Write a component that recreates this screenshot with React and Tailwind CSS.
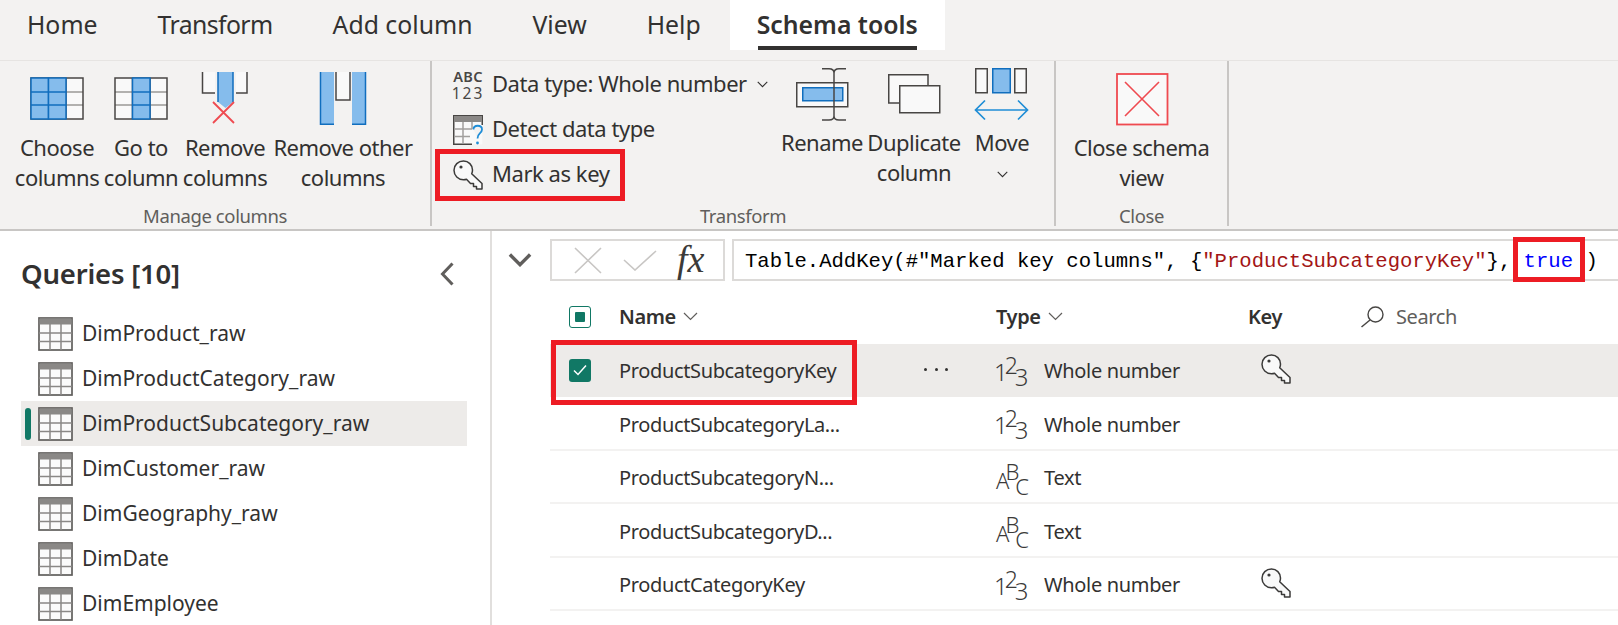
import React from 'react';

const tabs = ['Home', 'Transform', 'Add column', 'View', 'Help'];
const queries = ['DimProduct_raw', 'DimProductCategory_raw', 'DimProductSubcategory_raw', 'DimCustomer_raw', 'DimGeography_raw', 'DimDate', 'DimEmployee'];
const columns = [
    { name: 'ProductSubcategoryKey', kind: 'num', type: 'Whole number', isKey: true, selected: true },
    { name: 'ProductSubcategoryLa...', kind: 'num', type: 'Whole number' },
    { name: 'ProductSubcategoryN...', kind: 'abc', type: 'Text' },
    { name: 'ProductSubcategoryD...', kind: 'abc', type: 'Text' },
    { name: 'ProductCategoryKey', kind: 'num', type: 'Whole number', isKey: true },
];

const BLUE = '#85bcec';
const BLUE_LINE = '#106ebe';
const DARK = '#484644';
const WHITE = '#f9f9f9';
const RED = '#ef4a50';

const Canvas = ({ children }) => (
    <svg width="60" height="60" viewBox="0 0 60 60" fill="none" className="shrink-0">{children}</svg>
);

const GridIcon = ({ blue }) => {
    const xs = [4, 21.5, 39, 56];
    const ys = [12, 26, 39, 53];
    return (
        <Canvas>
            <rect x="4" y="12" width="52" height="41" fill={WHITE} />
            <line x1="4" x2="56" y1="26" y2="26" stroke="#9a9896" strokeWidth="1.5" />
            <line x1="4" x2="56" y1="39" y2="39" stroke="#9a9896" strokeWidth="1.5" />
            <rect x="4" y="12" width="52" height="41" stroke={DARK} strokeWidth="1.5" />
            <line x1="21.5" x2="21.5" y1="12" y2="53" stroke={DARK} strokeWidth="1.5" />
            <line x1="39" x2="39" y1="12" y2="53" stroke={DARK} strokeWidth="1.5" />
            {blue.map((c) => (
                <g key={c}>
                    <rect x={xs[c]} y="12" width={xs[c + 1] - xs[c]} height="41" fill={BLUE} stroke={BLUE_LINE} strokeWidth="1.5" />
                    {ys.slice(1, 3).map((y) => (
                        <line key={y} x1={xs[c]} x2={xs[c + 1]} y1={y} y2={y} stroke={BLUE_LINE} strokeWidth="1.5" />
                    ))}
                </g>
            ))}
        </Canvas>
    );
};

const RemoveIcon = () => (
    <Canvas>
        <path d="M7.5 6V27H52V6" fill={WHITE} stroke={DARK} strokeWidth="1.5" />
        <path d="M20 6V37L30.5 45L41 37V6Z" fill="#f3f2f1" />
        <path d="M23 6V36L30.5 42L38 36V6Z" fill={BLUE} />
        <path d="M23 6V36M38 6V36" stroke={BLUE_LINE} strokeWidth="1.5" />
        <path d="M18 36L39 57M39 36L18 57" stroke={RED} strokeWidth="1.8" />
    </Canvas>
);

const RemoveOtherIcon = () => (
    <Canvas>
        <path d="M23 6V34H37V6" fill={WHITE} stroke={DARK} strokeWidth="1.5" />
        <rect x="7" y="6" width="14" height="53" fill={BLUE} />
        <rect x="39" y="6" width="13.5" height="53" fill={BLUE} />
        <path d="M7.5 6V58.2H21M39 58.2H52.5V6" stroke={BLUE_LINE} strokeWidth="1.5" />
    </Canvas>
);

const RenameIcon = () => (
    <Canvas>
        <rect x="4.75" y="16.75" width="51" height="24" fill={WHITE} stroke={DARK} strokeWidth="1.5" />
        <rect x="10.75" y="21.75" width="40" height="13" fill={BLUE} stroke={BLUE_LINE} strokeWidth="1.5" />
        <path d="M30 2.75H37Q42 2.75 42 7V50Q42 54 37 54H30M54 2.75H47Q42 2.75 42 7M42 50Q42 54 47 54H54" stroke={DARK} strokeWidth="1.5" />
    </Canvas>
);

const DuplicateIcon = () => (
    <Canvas>
        <path d="M44 19V8.75H4.75V37H15" fill={WHITE} stroke={DARK} strokeWidth="1.5" />
        <rect x="15.75" y="19.75" width="40" height="27" fill={WHITE} stroke={DARK} strokeWidth="1.5" />
    </Canvas>
);

const MoveIcon = () => (
    <Canvas>
        <rect x="3.75" y="2.75" width="11.5" height="24" fill={WHITE} stroke={DARK} strokeWidth="1.5" />
        <rect x="20.75" y="2.75" width="17.5" height="24" fill={BLUE} stroke={BLUE_LINE} strokeWidth="1.5" />
        <rect x="42.75" y="2.75" width="11.5" height="24" fill={WHITE} stroke={DARK} strokeWidth="1.5" />
        <path d="M4 44H55M13 34.5L3.5 44L13 53.5M46 34.5L55.5 44L46 53.5" stroke="#1f8dd6" strokeWidth="1.7" />
    </Canvas>
);

const CloseIcon = () => (
    <Canvas>
        <rect x="5" y="8" width="50.5" height="50.5" fill={WHITE} stroke={RED} strokeWidth="1.8" />
        <path d="M13 16L47 50M47 16L13 50" stroke={RED} strokeWidth="1.6" />
    </Canvas>
);

const DetectIcon = () => (
    <svg width="30" height="30" viewBox="0 0 30 30" fill="none" className="shrink-0">
        <rect x="0.75" y="0.75" width="28.5" height="28.5" fill={WHITE} />
        <path d="M19 29.25H0.75V0.75H29.25V10" stroke={DARK} strokeWidth="1.5" />
        <rect x="1" y="1" width="28" height="6" fill="#8a8886" />
        <path d="M1 14H19M1 21.5H17M10 7V29M19 7V14" stroke="#a19f9d" strokeWidth="1.5" />
        <path d="M20.5 14.5C20.5 9.5 29 9.5 29 14.5C29 18.5 24.5 18 24.5 23.5" stroke="#1f8dd6" strokeWidth="1.8" fill="#f3f2f1" />
        <circle cx="24.5" cy="28" r="1.4" fill="#1f8dd6" />
    </svg>
);

const KeyIcon = ({ size = 30 }) => (
    <svg width={size} height={size} viewBox="0 0 30 30" fill="none" className="shrink-0">
        <path d="M10.5 1C15.5 1 19.5 5 19.5 10C19.5 11.5 19.2 12.6 18.7 13.7L29 23.5V29H23.5V26.5H20.5V23.5H17.5L13.5 19.3C12.5 19.7 11.5 19.8 10.5 19.8C5.2 19.8 1 15.5 1 10.3C1 5 5.2 1 10.5 1Z" fill={WHITE} stroke="#3b3a39" strokeWidth="1.5" strokeLinejoin="round" />
        <circle cx="8" cy="7" r="1.6" fill="#3b3a39" />
    </svg>
);

const TableIcon = () => (
    <svg width="35" height="34" viewBox="0 0 35 34" fill="none" className="shrink-0">
        <rect x="1" y="1" width="33" height="32" fill="#fbfbfb" stroke="#605e5c" strokeWidth="1.7" />
        <rect x="1.5" y="1.5" width="32" height="6" fill="#8a8886" />
        <path d="M1 16H34M1 24.5H34" stroke="#8a8886" strokeWidth="1.5" />
        <path d="M12 7V33M23 7V33" stroke="#8a8886" strokeWidth="1.5" />
    </svg>
);

const Chevron = ({ className = 'w-[15px] h-[9px]', stroke = '#605e5c', width = 1.2 }) => (
    <svg viewBox="0 0 15 9" fill="none" className={className}>
        <path d="M1 1L7.5 7.5L14 1" stroke={stroke} strokeWidth={width} />
    </svg>
);

const RedBox = ({ className }) => (
    <div className={`absolute border-[5px] border-[#ed1c24] z-10 pointer-events-none ${className}`} />
);

const RibbonButton = ({ icon, lines, width, gap = 'mt-[6px]' }) => (
    <div className={`flex flex-col items-center shrink-0 ${width}`}>
        {icon}
        <div className={`${gap} text-center text-[22px] tracking-[-0.5px] leading-[30px] whitespace-nowrap`}>
            {lines.map((line) => <div key={line}>{line}</div>)}
        </div>
    </div>
);

const Group = ({ width, label, children, className = '' }) => (
    <div className={`flex flex-col h-[165px] border-r-2 border-[#c8c6c4] shrink-0 relative ${width}`}>
        <div className={`flex flex-1 pt-[5px] ${className}`}>{children}</div>
        <div className="h-[21px] text-center text-[18.5px] tracking-[-0.4px] leading-[22px] text-[#605e5c]">{label}</div>
    </div>
);

const SmallAction = ({ icon, children }) => (
    <div className="flex items-center h-[45px] gap-[9px] text-[22px] tracking-[-0.45px] whitespace-nowrap">
        <div className="w-[30px] flex justify-center shrink-0">{icon}</div>
        {children}
    </div>
);

const Ribbon = () => (
    <div className="flex h-[171px] bg-[#f3f2f1] border-t border-[#e6e4e2] border-b-2 border-b-[#c8c6c4] text-[#323130]">
        <Group width="w-[432px]" label="Manage columns" className="pl-[15px]">
            <RibbonButton width="w-[84px]" icon={<GridIcon blue={[0, 1]} />} lines={['Choose', 'columns']} />
            <RibbonButton width="w-[84px]" icon={<GridIcon blue={[1]} />} lines={['Go to', 'column']} />
            <RibbonButton width="w-[84px]" icon={<RemoveIcon />} lines={['Remove', 'columns']} />
            <div className="w-[6px]" />
            <RibbonButton width="w-[140px]" icon={<RemoveOtherIcon />} lines={['Remove other', 'columns']} />
        </Group>
        <Group width="w-[624px]" label="Transform" className="pl-[21px]">
            <div className="flex flex-col w-[327px] -mt-[4px] relative">
                <SmallAction icon={
                    <div className="flex flex-col items-center text-[#484644]">
                        <span className="text-[14.5px] font-semibold tracking-[0.3px] leading-[14px]">ABC</span>
                        <span className="text-[15.5px] tracking-[2px] leading-[14px] mt-[3px]">123</span>
                    </div>
                }>
                    <span className="-mt-[2px]">Data type: Whole number</span>
                    <Chevron className="w-[11px] h-[7px] ml-[1px]" stroke="#323130" width={1.5} />
                </SmallAction>
                <SmallAction icon={<DetectIcon />}><span className="-mt-[2px]">Detect data type</span></SmallAction>
                <SmallAction icon={<KeyIcon />}><span className="-mt-[2px]">Mark as key</span></SmallAction>
                <RedBox className="-left-[18px] top-[87px] w-[190px] h-[52px]" />
            </div>
            <RibbonButton width="w-[84px]" gap="mt-[1px]" icon={<RenameIcon />} lines={['Rename']} />
            <RibbonButton width="w-[100px]" gap="mt-[1px]" icon={<DuplicateIcon />} lines={['Duplicate', 'column']} />
            <div className="w-[6px]" />
            <div className="flex flex-col items-center w-[64px]">
                <MoveIcon />
                <div className="mt-[1px] text-[22px] tracking-[-0.5px] leading-[30px]">Move</div>
                <Chevron className="w-[11px] h-[7px] mt-[14px]" stroke="#323130" width={1.5} />
            </div>
        </Group>
        <Group width="w-[173px]" label="Close">
            <RibbonButton width="w-full" icon={<CloseIcon />} lines={['Close schema', 'view']} />
        </Group>
    </div>
);

const TypeGlyph = ({ kind }) => (
    <div className="pt-[4px] -ml-[2px] leading-none text-[#3b3a39] whitespace-nowrap font-light">
        {kind === 'num' ? (
            <div className="tracking-[-3px]">
                <span className="text-[24px]">1</span>
                <span className="text-[23px] align-[7px]">2</span>
                <span className="text-[24px] align-[-5px]">3</span>
            </div>
        ) : (
            <div className="tracking-[-4px] pl-[2px]">
                <span className="text-[22px]">A</span>
                <span className="text-[22px] align-[9px]">B</span>
                <span className="text-[22px] align-[-6px]">C</span>
            </div>
        )}
    </div>
);

const columnGrid = 'grid grid-cols-[69px_305px_72px_48px_204px_112px_1fr] items-center';

const Row = ({ col }) => (
    <div className={`${columnGrid} relative h-[53.5px] border-b-2 ${col.selected ? 'bg-[#edebe9] border-b-[#edebe9]' : 'border-b-[#f3f2f1]'}`}>
        <div className="pl-[19px] pt-[2px]">
            {col.selected && (
                <div className="w-[22px] h-[23px] rounded-[3px] bg-[#117865] flex items-center justify-center">
                    <svg width="14" height="12" viewBox="0 0 14 12" fill="none">
                        <path d="M1 6.5L5 10.5L13 1.5" stroke="white" strokeWidth="1.5" />
                    </svg>
                </div>
            )}
        </div>
        <div className="pt-[4px] text-[20px] tracking-[-0.36px] text-[#323130] whitespace-nowrap">{col.name}</div>
        <div className="flex gap-[7.5px] pt-[1px]">
            {col.selected && [0, 1, 2].map((d) => <span key={d} className="w-[3px] h-[3px] rounded-full bg-[#323130]" />)}
        </div>
        <TypeGlyph kind={col.kind} />
        <div className="pt-[4px] text-[20px] tracking-[-0.33px] text-[#323130] whitespace-nowrap">{col.type}</div>
        <div className="pl-[13px]">{col.isKey && <KeyIcon />}</div>
        {col.selected && <RedBox className="left-[1px] -top-[3.5px] w-[306px] h-[65px]" />}
    </div>
);

const Sidebar = () => (
    <div className="w-[492px] h-full shrink-0 border-r-2 border-[#e1dfdd] pl-[21px]">
        <div className="flex items-center justify-between h-[80px] pt-[6px] pr-[36px]">
            <span className="text-[27.5px] tracking-[-0.2px] font-semibold text-[#323130] leading-none">Queries [10]</span>
            <svg width="14" height="24" viewBox="0 0 14 24" fill="none">
                <path d="M12.5 1.5L2.5 12L12.5 22.5" stroke="#605e5c" strokeWidth="3" />
            </svg>
        </div>
        <div className="w-[446px]">
            {queries.map((q, i) => (
                <div key={q} className={`relative flex items-center h-[45px] pl-[17px] gap-[9px] text-[21px] text-[#323130] ${i === 2 ? 'bg-[#edebe9]' : ''}`}>
                    {i === 2 && <span className="absolute left-[4px] top-[7px] w-[6px] h-[32px] rounded-[3px] bg-[#117865]" />}
                    <TableIcon />
                    <span>{q}</span>
                </div>
            ))}
        </div>
    </div>
);

const FormulaBar = () => (
    <div className="flex items-center h-[42px] pl-[16px]">
        <Chevron className="w-[24px] h-[14px]" stroke="#605e5c" width={2.2} />
        <div className="ml-[18px] w-[175px] h-full border-2 border-[#dcdad8] flex items-center shrink-0">
            <svg width="28" height="27" viewBox="0 0 28 27" fill="none" className="ml-[22px]">
                <path d="M1 1L27 26M27 1L1 26" stroke="#c8c6c4" strokeWidth="1.6" />
            </svg>
            <svg width="34" height="21" viewBox="0 0 34 21" fill="none" className="ml-[21px]">
                <path d="M1 10L12 20L33 1" stroke="#c8c6c4" strokeWidth="1.6" />
            </svg>
            <span className="ml-[20px] -mt-[2px] font-['Liberation_Serif',serif] italic text-[38px] leading-none text-[#3b3a39]">fx</span>
        </div>
        <div className="ml-[7px] flex-1 h-full border-y-2 border-l-2 border-[#dcdad8] pl-[11px] font-['Liberation_Mono',monospace] text-[20.6px] leading-[42px] text-black whitespace-nowrap">
            Table.AddKey(#"Marked key columns", {'{'}<span className="text-[#a31515]">"ProductSubcategoryKey"</span>{'}'},{' '}
            <span className="relative inline-block text-[#0000ff]">
                true
                <RedBox className="-left-[11px] -right-[12px] top-[-4px] bottom-[1px]" />
            </span>{' '}
            )
        </div>
    </div>
);

const SchemaTable = () => (
    <div className="ml-[58px] mt-[9px]">
        <div className={`${columnGrid} h-[53.5px]`}>
            <div className="pl-[19px]">
                <div className="w-[22px] h-[22px] rounded-[3px] border-[1.5px] border-[#117865] flex items-center justify-center">
                    <span className="w-[10px] h-[10px] rounded-[1px] bg-[#117865]" />
                </div>
            </div>
            <div className="col-span-2 flex items-center gap-[7px] text-[20px] tracking-[-0.4px] font-semibold text-[#323130]">
                Name <Chevron />
            </div>
            <div className="col-span-2 flex items-center gap-[7px] text-[20px] tracking-[-0.4px] font-semibold text-[#323130]">
                Type <Chevron />
            </div>
            <div className="text-[20px] tracking-[-0.4px] font-semibold text-[#323130]">Key</div>
            <div className="flex items-center gap-[11px] text-[20px] tracking-[-0.4px] text-[#605e5c]">
                <svg width="25" height="22" viewBox="0 0 25 22" fill="none" className="shrink-0">
                    <circle cx="15.5" cy="8.5" r="7.5" stroke="#484644" strokeWidth="1.4" />
                    <path d="M10 14L1.5 21" stroke="#484644" strokeWidth="1.5" />
                </svg>
                Search
            </div>
        </div>
        {columns.map((col) => <Row key={col.name} col={col} />)}
    </div>
);

export default function App() {
    return (
        <div className="w-[1618px] h-[625px] overflow-hidden bg-white font-['Noto_Sans',sans-serif]">
            <div className="flex h-[60px] bg-[#f3f2f1] items-start">
                <div className="flex h-[50px] items-center pl-[27px] gap-[60px] text-[24.8px] text-[#323130]">
                    {tabs.map((t) => <span key={t} className={t === 'Transform' ? 'tracking-[-0.6px]' : ''}>{t}</span>)}
                </div>
                <div className="ml-[29px] relative h-[50px] w-[215px] bg-white flex justify-center items-center text-[24.8px] font-semibold text-[#323130]">
                    <span>Schema tools</span>
                    <span className="absolute left-[28px] bottom-0 w-[159px] h-[4px] bg-[#323130]" />
                </div>
            </div>
            <Ribbon />
            <div className="flex h-[394px]">
                <Sidebar />
                <div className="flex-1 pt-[8px] min-w-0">
                    <FormulaBar />
                    <SchemaTable />
                </div>
            </div>
        </div>
    );
}
